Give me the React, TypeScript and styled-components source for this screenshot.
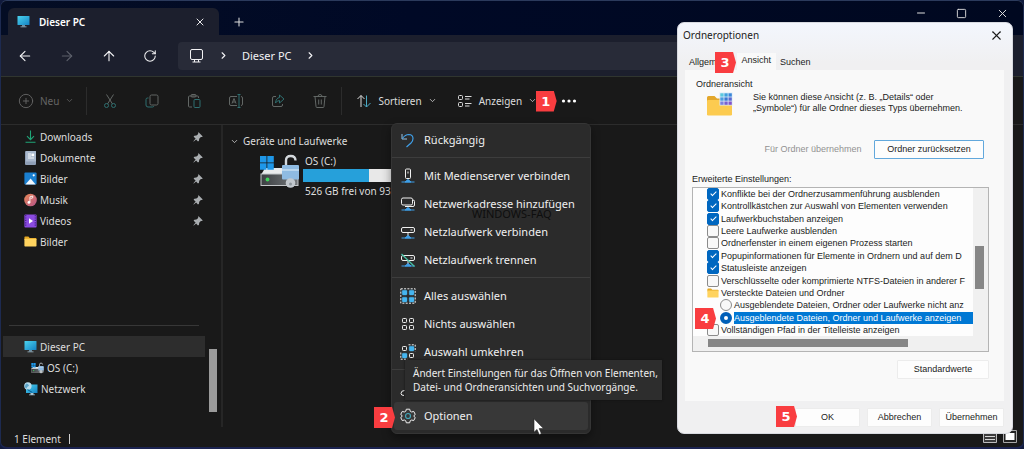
import React from 'react';
import styled, { createGlobalStyle, css } from 'styled-components';
import {
  ArrowLeft,
  ArrowRight,
  ArrowUp,
  ChevronDown,
  ChevronRight,
  CirclePlus,
  Minus,
  Plus,
  RotateCw,
  Square,
  X,
} from 'lucide-react';

const GlobalStyle = createGlobalStyle`
  *, *::before, *::after { box-sizing: border-box; }
  body {
    margin: 0;
    background: #101a3c;
    font-family: 'Noto Sans', 'Open Sans', sans-serif;
    font-size: 10px;
    line-height: 14px;
    color: #dedede;
  }
  button, input { font: inherit; color: inherit; margin: 0; }
  button { border: 0; padding: 0; background: none; white-space: nowrap; }
  svg { display: block; flex: none; }
`;

/* ---------- Explorer window ---------- */

const ExplorerWindow = styled.div`
  position: relative;
  display: flex;
  flex-direction: column;
  min-height: 100vh;
  overflow: hidden;
  background: #191919;
  border: 1px solid #1d2a50;
  border-top-color: #2b3a5c;
  border-bottom: 2px solid #1b2350;
  border-radius: 7px;
`;

const TitleBar = styled.header`
  display: flex;
  align-items: flex-end;
  height: 34px;
  padding-left: 7px;
  background: linear-gradient(90deg, #040d24, #000926 40%, #000820);
`;

const WindowTab = styled.div`
  display: flex;
  align-items: center;
  gap: 9px;
  width: 211px;
  height: 27px;
  padding: 0 13px 0 9px;
  border-radius: 6px 6px 0 0;
  background: #1c1f2d;
  color: #fff;
  font-weight: 600;
`;

const TabCaption = styled.span`
  flex: 1;
`;

const NewTabButton = styled.button`
  display: flex;
  align-items: center;
  height: 27px;
  margin-left: 13px;
`;

const WindowControls = styled.div`
  display: flex;
  align-items: center;
  gap: 29px;
  height: 24px;
  margin: 0 14px 0 auto;
  align-self: flex-start;
`;

const NavBar = styled.nav`
  display: flex;
  align-items: center;
  height: 42px;
  padding: 0 10px 0 16px;
  background: #1c1f2d;
  border-bottom: 1px solid #30352f;
`;

const NavButton = styled.button<{ $dim?: boolean }>`
  width: 42px;
  color: ${(p) => (p.$dim ? '#5d606b' : '#f0f0f2')};
`;

const AddressBar = styled.div`
  display: flex;
  flex: 1;
  align-items: center;
  height: 28px;
  padding-left: 11px;
  margin-left: -7px;
  border-radius: 4px;
  background: #282b38;
  color: #f2f2f4;
  font-size: 11px;
`;

const Crumb = styled.span`
  margin: 0 13px;
`;

const CrumbArrow = styled(ChevronRight)`
  margin-left: 13px;
  &:last-child { margin-left: 0; }
`;

const CommandBar = styled.div`
  display: flex;
  align-items: center;
  height: 48px;
  padding-left: 17px;
  border-bottom: 1px solid #2c2c2c;
`;

const Command = styled.button<{ $off?: boolean }>`
  position: relative;
  display: flex;
  align-items: center;
  gap: 6px;
  margin-right: ${(p) => (p.$off ? 12 : 20)}px;
  color: ${(p) => (p.$off ? '#656565' : '#dcdcdc')};
`;

const IconCommand = styled.button`
  display: flex;
  justify-content: center;
  width: 42px;
  color: #626765;
`;

const MoreCommand = styled.button`
  margin-left: 4px;
`;

const BarDivider = styled.span<{ $after: number }>`
  width: 1px;
  height: 28px;
  margin-right: ${(p) => p.$after}px;
  background: #2c2c2c;
`;

const Body = styled.div`
  display: flex;
  flex: 1;
`;

const Sidebar = styled.aside`
  display: flex;
  width: 222px;
  padding-top: 1px;
  border-right: 2px solid #262626;
`;

const Tree = styled.ul`
  flex: 1;
  margin: 0;
  padding: 0 0 0 2px;
  list-style: none;
`;

const TreeItem = styled.li<{ $level?: number; $selected?: boolean }>`
  display: flex;
  align-items: center;
  gap: 3px;
  height: 21px;
  padding: 0 1px 0 ${(p) => 21 + (p.$level ?? 0) * 7}px;
  background: ${(p) => (p.$selected ? '#2d2d2d' : 'transparent')};
`;

const TreeLabel = styled.span`
  flex: 1;
`;

const TreeDivider = styled.li`
  height: 84px;
  margin: 0 6px;
  padding-top: 73px;
  &::before {
    content: '';
    display: block;
    height: 1px;
    background: #373737;
  }
`;

const TreeScroll = styled.div`
  display: flex;
  align-items: flex-end;
  width: 16px;
  padding: 0 4px 15px;
`;

const TreeThumb = styled.div`
  flex: 1;
  height: 63px;
  background: #9b9b9b;
`;

const Files = styled.main`
  flex: 1;
  padding: 9px 0 0 7px;
`;

const GroupTitle = styled.h2`
  display: flex;
  align-items: center;
  gap: 4px;
  margin: 0;
  font-size: 10px;
  font-weight: 400;
`;

const Drive = styled.div`
  display: flex;
  gap: 3px;
  padding: 6px 0 0 29px;
`;

const DriveInfo = styled.div`
  width: 160px;
`;

const DriveLine = styled.div`
  padding-left: 2px;
`;

const Usage = styled.div`
  height: 13px;
  margin: 1px 0 2px;
  background: #e8e8e8;
`;

const UsageFill = styled.div`
  height: 100%;
  background: #26a0da;
`;

const StatusBar = styled.footer`
  display: flex;
  align-items: center;
  height: 20px;
  padding: 3px 6px 0 13px;
`;

const StatusDivider = styled.span`
  width: 1px;
  height: 10px;
  margin: 0 auto 0 8px;
  background: #d0d0d0;
`;

const StatusIcons = styled.div`
  display: flex;
  align-self: flex-start;
  gap: 6px;
`;

/* ---------- Numbered markers ---------- */

const Marker = styled.span<{ $left: number; $top: number }>`
  position: absolute;
  z-index: 5;
  left: ${(p) => p.$left}px;
  top: ${(p) => p.$top}px;
  width: 21px;
  height: 21px;
  padding-right: 1px;
  background: #f93d40;
  clip-path: polygon(0 0, 86% 0, 100% 50%, 86% 100%, 0 100%);
  color: #fff;
  font: bold 13px/21px 'DejaVu Sans', sans-serif;
  text-align: center;
`;

/* ---------- Overflow menu ---------- */

const Menu = styled.div`
  position: absolute;
  z-index: 2;
  left: 390px;
  top: 122px;
  width: 200px;
  padding: 2px 2px 3px;
  border: 1px solid #353535;
  border-radius: 6px;
  background: #2b2b2b;
  box-shadow: 0 4px 10px rgba(0, 0, 0, 0.4);
`;

const MenuItem = styled.button<{ $hover?: boolean }>`
  position: relative;
  display: flex;
  align-items: center;
  gap: 8px;
  width: 100%;
  height: 28px;
  padding-left: 6px;
  border-radius: 3px;
  background: ${(p) => (p.$hover ? '#383838' : 'transparent')};
  color: #f0f0f0;
  font-size: 11px;
`;

const MenuRule = styled.hr`
  height: 1px;
  margin: 3px -2px 4px;
  border: 0;
  background: #3d3d3d;
`;

const Tooltip = styled.div`
  position: absolute;
  z-index: 3;
  left: 404px;
  top: 359px;
  padding: 6px 4px 6px 8px;
  background: #2d2d2d;
  box-shadow: 0 0 2px #111;
  color: #ececec;
  white-space: nowrap;
`;

const Watermark = styled.div`
  position: absolute;
  z-index: 2;
  left: 471px;
  top: 206px;
  color: #0e0e0e;
  font-size: 11px;
`;

const Pointer = styled.svg`
  position: absolute;
  z-index: 4;
  left: 532px;
  top: 417px;
`;

/* ---------- Folder options dialog ---------- */

const Dialog = styled.section`
  position: absolute;
  z-index: 3;
  top: 21px;
  right: 10px;
  width: 336px;
  padding: 0 8px 6px 7px;
  border: 1px solid #d8dae0;
  border-radius: 7px;
  background: linear-gradient(#f3f6fd, #f0f0f1 40px);
  color: #1b1b1b;
  font: 9px/11px 'Liberation Sans', Arial, sans-serif;
`;

const DialogTitle = styled.div`
  display: flex;
  align-items: center;
  justify-content: space-between;
  height: 24px;
  margin-left: -2px;
  font: 10px/14px 'Noto Sans', sans-serif;
`;

const TabList = styled.div`
  position: relative;
  display: flex;
  align-items: flex-end;
  height: 23px;
`;

const DialogTab = styled.button<{ $active?: boolean }>`
  height: 14px;
  padding: 0 6px 2px 4px;
  ${(p) =>
    p.$active &&
    css`
      height: 17px;
      margin-left: 2px;
      padding: 0 5px 2px;
      background: #f9f9f9;
    `}
`;

const TabPanel = styled.div`
  position: relative;
  padding: 9px 15px 22px 7px;
  background: #f9f9f9;
`;

const Group = styled.fieldset`
  display: grid;
  grid-template-columns: 26px 1fr;
  column-gap: 20px;
  margin: 0 0 7px;
  padding: 2px 5px 8px 15px;
  border: 0;
`;

const GroupLegend = styled.legend`
  margin-left: -11px;
  padding: 0;
`;

const GroupText = styled.p`
  margin: 0;
`;

const GroupActions = styled.div`
  display: flex;
  grid-column: 1 / -1;
  justify-content: flex-end;
  gap: 5px;
  margin-top: 22px;
`;

const PushButton = styled.button<{ $width: number; $look?: 'focus' | 'flat' }>`
  position: relative;
  width: ${(p) => p.$width}px;
  height: 19px;
  border: 1px solid #ececec;
  border-radius: 1px;
  background: #fdfdfd;
  ${(p) => p.$look === 'focus' && css`border-color: #62a8dc;`}
  ${(p) =>
    p.$look === 'flat' &&
    css`
      border-color: transparent;
      background: transparent;
      color: #929292;
    `}
`;

const ListLabel = styled.div`
  margin-bottom: 2px;
`;

const SettingsBox = styled.div`
  display: grid;
  grid-template-columns: 1fr 15px;
  border: 1px solid #b4b4b4;
  background: #f0f0f0;
`;

const SettingsList = styled.ul`
  display: flex;
  flex-direction: column;
  justify-content: space-between;
  height: 148px;
  margin: 0;
  padding: 0 0 0 14px;
  overflow: hidden;
  background: #fdfdfd;
  list-style: none;
`;

const Setting = styled.li<{ $indent?: boolean }>`
  display: flex;
  height: 12px;
  padding-left: ${(p) => (p.$indent ? 13 : 0)}px;
  overflow: hidden;
  white-space: nowrap;
`;

const SettingLabel = styled.label`
  display: flex;
  align-items: center;
  gap: 2px;
`;

const SettingText = styled.span<{ $selected?: boolean }>`
  height: 12px;
  line-height: 12px;
  ${(p) =>
    p.$selected &&
    css`
      width: 240px;
      background: #0078d4;
      color: #fff;
    `}
`;

const CheckBox = styled.input.attrs({ type: 'checkbox' })`
  appearance: none;
  display: flex;
  align-items: center;
  justify-content: center;
  width: 12px;
  height: 12px;
  border: 1px solid #8b8b8b;
  border-radius: 2px;
  background: #f8f8f8;
  &:checked {
    border-color: #0067c0;
    background: #0067c0;
  }
  &:checked::after {
    content: '';
    width: 3px;
    height: 6px;
    margin-bottom: 2px;
    border: solid #fff;
    border-width: 0 1px 1px 0;
    transform: rotate(45deg);
  }
`;

const Radio = styled.input.attrs({ type: 'radio' })`
  appearance: none;
  width: 12px;
  height: 12px;
  border: 1px solid #8b8b8b;
  border-radius: 50%;
  background: #f8f8f8;
  &:checked {
    border: 4px solid #005fb8;
    background: #fff;
  }
`;

const VerticalScroll = styled.div`
  padding: 58px 4px 0 2px;
`;

const HorizontalScroll = styled.div`
  grid-column: 1 / -1;
  height: 15px;
  padding: 3px 80px 0 15px;
`;

const ScrollThumb = styled.div<{ $height: number }>`
  height: ${(p) => p.$height}px;
  background: #868686;
`;

const PanelFooter = styled.div`
  display: flex;
  justify-content: flex-end;
  margin-top: 8px;
`;

const DialogButtons = styled.div`
  display: flex;
  justify-content: flex-end;
  gap: 7px;
  padding-top: 7px;
`;

/* ---------- Drawings ---------- */

const MonitorIcon = () => (
  <svg width="13" height="13" viewBox="0 0 13 13">
    <defs>
      <linearGradient id="screen" x1="0" y1="0" x2="1" y2="1">
        <stop offset="0" stopColor="#4bd3ee" />
        <stop offset="1" stopColor="#1482c4" />
      </linearGradient>
    </defs>
    <rect x="0.5" y="1" width="12" height="9" rx="0.6" fill="url(#screen)" />
    <path d="M5 10h3v1.4H5z" fill="#6b8ea3" />
    <path d="M3.5 11.4h6v.8h-6z" fill="#a8c3d0" />
  </svg>
);

const NetworkIcon = () => (
  <svg width="14" height="14" viewBox="0 0 14 14">
    <rect x="2" y="2.5" width="11.5" height="8.5" fill="url(#screen)" />
    <path d="M6.5 11h3v1.4h-3zM5 12.4h6v.8H5z" fill="#a8c3d0" />
    <circle cx="3.9" cy="4" r="3.7" fill="#b7dcec" />
    <path d="M2 1.6l2 .4 1 1.8-1.6 1-1.2 2-1.5-2z" fill="#5ba4c9" />
    <path d="M3.5 7.6l4.8 2.8" stroke="#0d5c94" />
  </svg>
);

const DownloadIcon = () => (
  <svg width="13" height="13" viewBox="0 0 13 13" fill="none" stroke="#1fa577" strokeWidth="1.1">
    <path d="M6.5 0.5v9M3 6.2l3.5 3.5L10 6.2M1.5 12.2h10" />
  </svg>
);

const DocumentIcon = () => (
  <svg width="13" height="14" viewBox="0 0 13 14">
    <rect x="1" y="0" width="11" height="14" rx="1" fill="#8f9fb6" />
    <rect x="2" y="0" width="10" height="10.5" rx="0.6" fill="#a9b8cc" />
    <path d="M4 3h3M4 5h3M4 7h6" stroke="#fff" strokeWidth="0.9" />
    <rect x="7.5" y="2.6" width="2.6" height="2.6" fill="#fff" />
  </svg>
);

const PicturesIcon = () => (
  <svg width="13" height="13" viewBox="0 0 13 13">
    <rect x="0.4" y="0.4" width="12.2" height="12.2" rx="1" fill="#1a7fcf" />
    <path d="M1.4 12.6l5.2-6 5 6z" fill="#f2f8fd" />
    <circle cx="9.7" cy="3.3" r="1.1" fill="#fff" />
  </svg>
);

const MusicIcon = () => (
  <svg width="13" height="14" viewBox="0 0 14 14">
    <defs>
      <linearGradient id="music" x1="0" y1="0" x2="1" y2="1">
        <stop offset="0" stopColor="#e98a57" />
        <stop offset="1" stopColor="#b65489" />
      </linearGradient>
    </defs>
    <circle cx="7" cy="7" r="6.8" fill="url(#music)" />
    <path d="M6.4 9.6V3.6l3-.9v2l-2.2.7" fill="none" stroke="#fff" strokeWidth="0.9" />
    <circle cx="5.3" cy="9.6" r="1.5" fill="#fff" />
  </svg>
);

const VideosIcon = () => (
  <svg width="13" height="14" viewBox="0 0 13 14">
    <rect x="0.4" y="0.4" width="12.2" height="13.2" rx="1" fill="#8b4be0" />
    <path d="M1.7 1v12M11.3 1v12" stroke="#4b2292" strokeWidth="1.3" strokeDasharray="1.2 1.2" />
    <path d="M5 4.2l4 2.8-4 2.8z" fill="#fff" />
  </svg>
);

const FolderIcon = ({ size = 13 }: { size?: number }) => (
  <svg width={size} height={size} viewBox="0 0 13 13">
    <path d="M.4 2.4q0-.8.8-.8h3.2l1.3 1.3h6q.8 0 .8.8v1H.4z" fill="#e5a823" />
    <rect x="0.4" y="3.8" width="12.1" height="7.6" rx="0.7" fill="#ffd35e" />
  </svg>
);

const FolderViewIcon = () => (
  <svg width="26" height="26" viewBox="0 0 26 26">
    <path d="M0 5.5q0-1.5 1.5-1.5h6l2.5 2.5h14v4H0z" fill="#e3a72b" />
    <rect x="0" y="8" width="25" height="15.5" rx="1.2" fill="#fccb50" />
    <rect x="12.5" y="0.5" width="13" height="13" fill="#d9e9f8" />
    {[0, 1, 2].map((r) =>
      [0, 1, 2].map((c) => (
        <rect
          key={`${r}${c}`}
          x={13.3 + c * 4.1}
          y={1.3 + r * 4.1}
          width="3.3"
          height="3.3"
          fill={[['#5bc8df', '#3fa0dc', '#3a86d8'], ['#4b9be0', '#3c78d0', '#5a68cf'], ['#7d80de', '#7a5fd0', '#8455c8']][r][c]}
        />
      )),
    )}
  </svg>
);

const PinIcon = () => (
  <svg width="12" height="12" viewBox="0 0 12 12">
    <path d="M6.600 1.200l4.200 4.200-1 .7-.9-.1-1.700 1.800-.2 2-1 .6-1.900-2-2.600 2.400.1-.8 2-2.400-2-1.900.8-.9 2-.2 1.900-1.700-.3-1z" fill="#a9adb0" />
  </svg>
);

const DriveIcon = ({ width, height }: { width: number; height: number }) => (
  <svg width={width} height={height} viewBox="0 0 41 35">
    <defs>
      <linearGradient id="drive" x1="0" y1="0" x2="1" y2="0">
        <stop offset="0" stopColor="#3c3f42" />
        <stop offset="1" stopColor="#75797c" />
      </linearGradient>
    </defs>
    <path d="M6 14h26l7 7H2z" fill="#e9ebec" />
    <rect x="2" y="20" width="37" height="11.5" fill="url(#drive)" stroke="#c4c7c9" strokeWidth="1" />
    <circle cx="8.5" cy="25.5" r="1.9" fill="#3fd35a" />
    <path d="M1 2h6.5v6.5H1zM8.3 2h6.5v6.5H8.3zM1 9.3h6.5v6.5H1zM8.3 9.3h6.5v6.5H8.3z" fill="#1e97e8" />
    <path d="M27 11V6.500q0-4.500 4.700-4.500t4.800 4.500" fill="none" stroke="#d3d8dc" strokeWidth="2.4" />
    <rect x="23" y="11" width="17" height="14.5" rx="1" fill="#8fbbe2" />
    <path d="M23 16h17" stroke="#b9d6ee" strokeWidth="2" />
    <circle cx="31.5" cy="29" r="4.8" fill="#c2c8cd" />
    <circle cx="31.5" cy="30" r="1.5" fill="#8d959b" />
  </svg>
);

type StrokeIconProps = { children: React.ReactNode; size?: number };
const StrokeIcon = ({ children, size = 16 }: StrokeIconProps) => (
  <svg width={size} height={size} viewBox="0 0 16 16" fill="none" stroke="currentColor" strokeWidth="1">
    {children}
  </svg>
);

const teal = '#2f6f70';
const blue = '#3f9fe8';

const PcOutline = () => (
  <StrokeIcon>
    <rect x="1.5" y="1.5" width="12" height="10" rx="1.5" />
    <path d="M5.5 11.5v2.5M9.5 11.5v2.5M3.5 14h8" />
  </StrokeIcon>
);
const CutIcon = () => (
  <StrokeIcon>
    <path d="M4.5 1.5l6 9.5M11.5 1.5L5.5 11" />
    <circle cx="4.5" cy="12.5" r="2" stroke={teal} />
    <circle cx="11.5" cy="12.5" r="2" stroke={teal} />
  </StrokeIcon>
);
const CopyIcon = () => (
  <StrokeIcon>
    <rect x="6" y="2" width="8" height="10" rx="1.5" />
    <path d="M4.5 5H3.5Q2 5 2 6.5v5.500q0 2 2 2h4.500q1 0 1.500-1" stroke={teal} />
  </StrokeIcon>
);
const PasteIcon = () => (
  <StrokeIcon>
    <path d="M6 14H3.500q-1 0-1-1V4q0-1 1-1h8q1 0 1 1v1" />
    <rect x="5" y="1.5" width="5" height="2.5" rx="1" />
    <rect x="8" y="6.5" width="6" height="8" rx="1" stroke={teal} />
  </StrokeIcon>
);
const RenameIcon = () => (
  <StrokeIcon>
    <path d="M9 3.500H3q-1.500 0-1.500 1.500v6q0 1.500 1.500 1.500h6M13 3.500q1.500 0 1.500 1.500v6q0 1.500-1.500 1.500" />
    <path d="M4 10.500l2-5 2 5M4.700 9h2.600" />
    <path d="M11 1.500v13M9.500 1.500h3M9.500 14.500h3" stroke={teal} />
  </StrokeIcon>
);
const ShareIcon = () => (
  <StrokeIcon>
    <path d="M6 3.500H4q-1.500 0-1.500 1.500v7q0 1.500 1.500 1.500h7q1.500 0 1.500-1.500v-1" />
    <path d="M9.500 2l4.500 4-4.500 4V7.500Q7 7.500 5.500 10 6 5 9.500 4.500z" stroke={teal} />
  </StrokeIcon>
);
const TrashIcon = () => (
  <StrokeIcon>
    <path d="M1.500 3.500h13M6 3.500q0-2 2-2t2 2M3 3.500l1 10q0 1 1 1h6q1 0 1-1l1-10M6.700 6.500v5M9.300 6.500v5" />
  </StrokeIcon>
);
const SortIcon = () => (
  <StrokeIcon>
    <path d="M5 14V2.500M1.500 6L5 2.500 8.500 6" />
    <path d="M10.500 2.500V14M7.500 11l3 3 4-4" stroke="#4aa9c4" />
  </StrokeIcon>
);
const ViewIcon = () => (
  <StrokeIcon>
    <rect x="1.5" y="2.5" width="4" height="4" rx="1" />
    <rect x="1.5" y="9.5" width="4" height="4" rx="1" />
    <path d="M8 3.500h6.500M8 6h4.500M8 10.500h6.500M8 13h4.500" />
  </StrokeIcon>
);

const UndoIcon = () => (
  <StrokeIcon>
    <path d="M2 2v5h5" stroke="#9cc7e6" />
    <path d="M2.300 6.500q3-4 6.500-4 4.200.2 4.200 4Q13 9 11 11l-4.500 4" stroke={blue} strokeWidth="1.2" />
  </StrokeIcon>
);
const NetBase = () => <path d="M1.500 14h13M5 14l3-2.500 3 2.500z" stroke={blue} fill={blue} />;
const MediaServerIcon = () => (
  <StrokeIcon>
    <rect x="5.5" y="1" width="5" height="9.5" rx="1" />
    <path d="M8 3.500v2" />
    <NetBase />
  </StrokeIcon>
);
const NetAddressIcon = () => (
  <StrokeIcon>
    <rect x="1.5" y="2" width="11" height="7" rx="1.5" />
    <path d="M13 4q1.500 0 1.500 1.500V9q0 1.500-1.500 1.500H5" />
    <NetBase />
  </StrokeIcon>
);
const NetDriveIcon = ({ off = false }: { off?: boolean }) => (
  <StrokeIcon>
    <rect x="1.5" y="3.5" width="13" height="5" rx="1.5" />
    <path d="M10.500 6h2M8 8.500V12" />
    <NetBase />
    {off && <path d="M1.500 2l13 12.500" stroke="#49c3a6" strokeWidth="1.3" />}
  </StrokeIcon>
);

const selectionCells: [number, number][] = [[2.5, 2.5], [9.5, 2.5], [2.5, 9.5], [9.5, 9.5]];
const SelectIcon = ({ filled, frame }: { filled: number[]; frame?: string }) => (
  <StrokeIcon>
    {frame && <path d={frame} strokeDasharray="2 1.3" />}
    {selectionCells.map(([x, y], i) =>
      filled.includes(i) ? (
        <rect key={i} x={x - 0.3} y={y - 0.3} width="4.8" height="4.8" rx="1" fill="#45b5f0" stroke="#45b5f0" strokeWidth="0.4" />
      ) : (
        <rect key={i} x={x} y={y} width="4" height="4" rx="0.8" />
      ),
    )}
  </StrokeIcon>
);
const WrenchIcon = () => (
  <StrokeIcon>
    <path d="M4.500 10.500Q1 10.500 1 13.500 1 15.500 4 15.500" />
  </StrokeIcon>
);
const GearIcon = () => (
  <StrokeIcon>
    <path d="M6.300 1.200h3.400l.5 2 1.500.8 2-.6 1.500 2.800-1.400 1.800 1.400 1.800-1.500 2.800-2-.6-1.500.8-.5 2H6.300l-.5-2-1.500-.8-2 .6L.800 9.800 2.200 8 .800 6.200l1.500-2.800 2 .6 1.500-.8z" />
    <circle cx="8" cy="8" r="2.5" stroke="#43a6b8" strokeWidth="1.2" />
  </StrokeIcon>
);
const DotsIcon = () => (
  <svg width="16" height="16" viewBox="0 0 16 16" fill="#fff">
    <circle cx="2.5" cy="8" r="1.6" />
    <circle cx="8" cy="8" r="1.6" />
    <circle cx="13.5" cy="8" r="1.6" />
  </svg>
);

/* ---------- Data ---------- */

const pinned = [
  { name: 'Downloads', icon: <DownloadIcon /> },
  { name: 'Dokumente', icon: <DocumentIcon /> },
  { name: 'Bilder', icon: <PicturesIcon /> },
  { name: 'Musik', icon: <MusicIcon /> },
  { name: 'Videos', icon: <VideosIcon /> },
];

const settingsBefore: [string, boolean][] = [
  ['Konflikte bei der Ordnerzusammenführung ausblenden', true],
  ['Kontrollkästchen zur Auswahl von Elementen verwenden', true],
  ['Laufwerkbuchstaben anzeigen', true],
  ['Leere Laufwerke ausblenden', false],
  ['Ordnerfenster in einem eigenen Prozess starten', false],
  ['Popupinformationen für Elemente in Ordnern und auf dem D', true],
  ['Statusleiste anzeigen', true],
  ['Verschlüsselte oder komprimierte NTFS-Dateien in anderer F', false],
];

const usedShare = 41;

const CheckSetting = ({ text, checked }: { text: string; checked: boolean }) => (
  <Setting>
    <SettingLabel>
      <CheckBox defaultChecked={checked} />
      <SettingText>{text}</SettingText>
    </SettingLabel>
  </Setting>
);

const FolderOptions = () => (
  <Dialog role="dialog" aria-labelledby="dialog-title">
    <DialogTitle>
      <span id="dialog-title">Ordneroptionen</span>
      <button aria-label="Schließen">
        <X size={15} strokeWidth={1.7} />
      </button>
    </DialogTitle>
    <TabList role="tablist">
      <DialogTab role="tab">Allgemein</DialogTab>
      <Marker $left={30} $top={5}>3</Marker>
      <DialogTab role="tab" aria-selected $active>Ansicht</DialogTab>
      <DialogTab role="tab">Suchen</DialogTab>
    </TabList>
    <TabPanel role="tabpanel">
      <Group>
        <GroupLegend>Ordneransicht</GroupLegend>
        <FolderViewIcon />
        <GroupText>
          Sie können diese Ansicht (z. B. „Details“ oder
          <br />
          „Symbole“) für alle Ordner dieses Typs übernehmen.
        </GroupText>
        <GroupActions>
          <PushButton $width={112} $look="flat" disabled>Für Ordner übernehmen</PushButton>
          <PushButton $width={110} $look="focus">Ordner zurücksetzen</PushButton>
        </GroupActions>
      </Group>
      <ListLabel>Erweiterte Einstellungen:</ListLabel>
      <SettingsBox>
        <SettingsList>
          {settingsBefore.map(([text, checked]) => (
            <CheckSetting key={text} text={text} checked={checked} />
          ))}
          <Setting>
            <SettingLabel as="span">
              <FolderIcon size={12} />
              <SettingText>Versteckte Dateien und Ordner</SettingText>
            </SettingLabel>
          </Setting>
          <Setting $indent>
            <SettingLabel>
              <Radio name="hidden-files" />
              <SettingText>Ausgeblendete Dateien, Ordner oder Laufwerke nicht anz</SettingText>
            </SettingLabel>
          </Setting>
          <Setting $indent>
            <SettingLabel>
              <Radio name="hidden-files" defaultChecked />
              <SettingText $selected>Ausgeblendete Dateien, Ordner und Laufwerke anzeigen</SettingText>
            </SettingLabel>
          </Setting>
          <CheckSetting text="Vollständigen Pfad in der Titelleiste anzeigen" checked={false} />
        </SettingsList>
        <VerticalScroll>
          <ScrollThumb $height={43} />
        </VerticalScroll>
        <HorizontalScroll>
          <ScrollThumb $height={8} />
        </HorizontalScroll>
      </SettingsBox>
      <Marker $left={10} $top={238}>4</Marker>
      <PanelFooter>
        <PushButton $width={92}>Standardwerte</PushButton>
      </PanelFooter>
    </TabPanel>
    <DialogButtons>
      <PushButton $width={65}>
        OK
        <Marker $left={-20} $top={-3}>5</Marker>
      </PushButton>
      <PushButton $width={65}>Abbrechen</PushButton>
      <PushButton $width={65}>Übernehmen</PushButton>
    </DialogButtons>
  </Dialog>
);

const OverflowMenu = () => (
  <Menu role="menu">
    <MenuItem role="menuitem"><UndoIcon />Rückgängig</MenuItem>
    <MenuRule />
    <MenuItem role="menuitem"><MediaServerIcon />Mit Medienserver verbinden</MenuItem>
    <MenuItem role="menuitem"><NetAddressIcon />Netzwerkadresse hinzufügen</MenuItem>
    <MenuItem role="menuitem"><NetDriveIcon />Netzlaufwerk verbinden</MenuItem>
    <MenuItem role="menuitem"><NetDriveIcon off />Netzlaufwerk trennen</MenuItem>
    <MenuRule />
    <MenuItem role="menuitem">
      <SelectIcon filled={[0, 1, 2, 3]} frame="M.8.8h14.400v14.400H.8z" />Alles auswählen
    </MenuItem>
    <MenuItem role="menuitem"><SelectIcon filled={[]} />Nichts auswählen</MenuItem>
    <MenuItem role="menuitem">
      <SelectIcon filled={[1, 2]} frame="M8.500.8h6.700v6.700M.8 8.500v6.700h6.700" />Auswahl umkehren
    </MenuItem>
    <MenuRule />
    <MenuItem role="menuitem" aria-label="Eigenschaften"><WrenchIcon /></MenuItem>
    <MenuItem role="menuitem" $hover>
      <GearIcon />Optionen
      <Marker $left={-20} $top={5}>2</Marker>
    </MenuItem>
  </Menu>
);

export default function App() {
  return (
    <ExplorerWindow>
      <GlobalStyle />
      <TitleBar>
        <WindowTab>
          <MonitorIcon />
          <TabCaption>Dieser PC</TabCaption>
          <button aria-label="Tab schließen"><X size={12} strokeWidth={1.8} /></button>
        </WindowTab>
        <NewTabButton aria-label="Neuer Tab"><Plus size={14} strokeWidth={1.8} /></NewTabButton>
        <WindowControls>
          <button aria-label="Minimieren"><Minus size={12} strokeWidth={2} /></button>
          <button aria-label="Maximieren"><Square size={11} strokeWidth={2} /></button>
          <button aria-label="Fenster schließen"><X size={13} strokeWidth={1.8} /></button>
        </WindowControls>
      </TitleBar>
      <NavBar>
        <NavButton aria-label="Zurück"><ArrowLeft size={16} strokeWidth={1.7} /></NavButton>
        <NavButton aria-label="Vorwärts" $dim><ArrowRight size={16} strokeWidth={1.7} /></NavButton>
        <NavButton aria-label="Aufwärts"><ArrowUp size={16} strokeWidth={1.7} /></NavButton>
        <NavButton aria-label="Aktualisieren"><RotateCw size={14} strokeWidth={1.8} /></NavButton>
        <AddressBar>
          <PcOutline />
          <CrumbArrow size={11} strokeWidth={2.5} />
          <Crumb>Dieser PC</Crumb>
          <CrumbArrow size={11} strokeWidth={2.5} />
        </AddressBar>
      </NavBar>
      <CommandBar>
        <Command $off>
          <CirclePlus size={16} strokeWidth={1.4} />
          Neu
          <ChevronDown size={9} strokeWidth={2} />
        </Command>
        <BarDivider $after={2} />
        <IconCommand aria-label="Ausschneiden"><CutIcon /></IconCommand>
        <IconCommand aria-label="Kopieren"><CopyIcon /></IconCommand>
        <IconCommand aria-label="Einfügen"><PasteIcon /></IconCommand>
        <IconCommand aria-label="Umbenennen"><RenameIcon /></IconCommand>
        <IconCommand aria-label="Freigeben"><ShareIcon /></IconCommand>
        <IconCommand aria-label="Löschen"><TrashIcon /></IconCommand>
        <BarDivider $after={14} />
        <Command><SortIcon />Sortieren<ChevronDown size={9} strokeWidth={2} /></Command>
        <Command>
          <ViewIcon />Anzeigen<ChevronDown size={9} strokeWidth={2} />
          <Marker $left={79} $top={-2}>1</Marker>
        </Command>
        <MoreCommand aria-label="Mehr anzeigen"><DotsIcon /></MoreCommand>
      </CommandBar>
      <Body>
        <Sidebar>
          <Tree>
            {pinned.map((p) => (
              <TreeItem key={p.name}>
                {p.icon}
                <TreeLabel>{p.name}</TreeLabel>
                <PinIcon />
              </TreeItem>
            ))}
            <TreeItem><FolderIcon /><TreeLabel>Bilder</TreeLabel></TreeItem>
            <TreeDivider />
            <TreeItem $selected><MonitorIcon /><TreeLabel>Dieser PC</TreeLabel></TreeItem>
            <TreeItem $level={1}><DriveIcon width={13} height={12} /><TreeLabel>OS (C:)</TreeLabel></TreeItem>
            <TreeItem><NetworkIcon /><TreeLabel>Netzwerk</TreeLabel></TreeItem>
          </Tree>
          <TreeScroll><TreeThumb /></TreeScroll>
        </Sidebar>
        <Files>
          <GroupTitle><ChevronDown size={9} strokeWidth={2} />Geräte und Laufwerke</GroupTitle>
          <Drive>
            <DriveIcon width={41} height={35} />
            <DriveInfo>
              <DriveLine>OS (C:)</DriveLine>
              <Usage><UsageFill style={{ width: `${usedShare}%` }} /></Usage>
              <DriveLine>526 GB frei von 93</DriveLine>
            </DriveInfo>
          </Drive>
        </Files>
      </Body>
      <StatusBar>
        1 Element
        <StatusDivider />
        <StatusIcons>
          <svg width="14" height="13" viewBox="0 0 14 13">
            <path d="M.5.5h13v12H.5z" fill="#3c3c3c" stroke="#bdbdbd" />
            <path d="M2 3.500h10M2 6.500h10M2 9.500h10" stroke="#d8d8d8" />
          </svg>
          <svg width="14" height="13" viewBox="0 0 14 13">
            <path d="M.5.5h13v12H.5z" fill="#222" stroke="#a8a8a8" />
            <path d="M2.500 3h9v7h-9z" fill="#fff" />
          </svg>
        </StatusIcons>
      </StatusBar>
      <OverflowMenu />
      <Watermark>WINDOWS-FAQ</Watermark>
      <Tooltip role="tooltip">
        Ändert Einstellungen für das Öffnen von Elementen,
        <br />
        Datei- und Ordneransichten und Suchvorgänge.
      </Tooltip>
      <Pointer width="12" height="18" viewBox="0 0 12 18">
        <path d="M1 .8v13.400l3-2.800 2.200 5.200 2.200-.9-2.200-5.100h4.300z" fill="#fff" stroke="#222" strokeWidth="0.6" />
      </Pointer>
      <FolderOptions />
    </ExplorerWindow>
  );
}
